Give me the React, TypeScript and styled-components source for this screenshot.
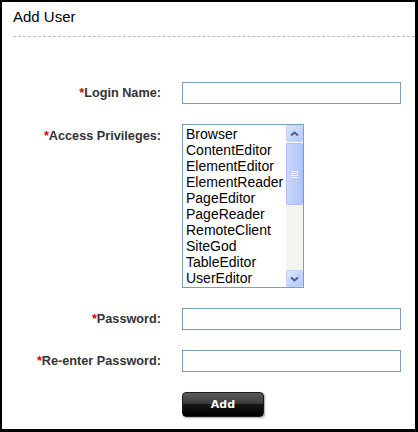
import styled, { createGlobalStyle } from "styled-components";

const GlobalStyle = createGlobalStyle`
  html, body {
    margin: 0;
    padding: 0;
    background: #fff;
  }
`;

const privileges = [
  "Browser",
  "ContentEditor",
  "ElementEditor",
  "ElementReader",
  "PageEditor",
  "PageReader",
  "RemoteClient",
  "SiteGod",
  "TableEditor",
  "UserEditor",
];

const fields = [
  { label: "Password:", type: "password" },
  { label: "Re-enter Password:", type: "password" },
];

function Chevron({ down }: { down?: boolean }) {
  return (
    <svg width="9" height="6" viewBox="0 0 9 6">
      <path
        d={down ? "M1 1.5 L4.5 4.5 L8 1.5" : "M1 4.5 L4.5 1.5 L8 4.5"}
        fill="none"
        stroke="#4d6185"
        strokeWidth="2"
      />
    </svg>
  );
}

function App() {
  return (
    <>
      <GlobalStyle />
      <Frame>
        <Heading>Add User</Heading>
        <Form>
          <Row>
            <Label>
              <Star>*</Star>Login Name:
            </Label>
            <TextInput type="text" />
          </Row>
          <Row>
            <Label $top>
              <Star>*</Star>Access Privileges:
            </Label>
            <ListBox>
              <Options>
                {privileges.map((p) => (
                  <Option key={p}>{p}</Option>
                ))}
              </Options>
              <ScrollBar>
                <ScrollButton>
                  <Chevron />
                </ScrollButton>
                <Track>
                  <Thumb>
                    <Grip />
                  </Thumb>
                </Track>
                <ScrollButton>
                  <Chevron down />
                </ScrollButton>
              </ScrollBar>
            </ListBox>
          </Row>
          {fields.map((f) => (
            <Row key={f.label}>
              <Label>
                <Star>*</Star>
                {f.label}
              </Label>
              <TextInput type={f.type} />
            </Row>
          ))}
          <Row>
            <span />
            <AddButton type="button">Add</AddButton>
          </Row>
        </Form>
      </Frame>
    </>
  );
}

const Frame = styled.div`
  box-sizing: border-box;
  width: 418px;
  height: 432px;
  border-style: solid;
  border-color: #000;
  border-width: 2px 3px 3px 2px;
  background: #fff;
  font-family: "Liberation Sans", Arial, sans-serif;
`;

const Heading = styled.h1`
  margin: 0 0 0 11px;
  padding: 6px 0 10px;
  font-size: 15px;
  line-height: 18px;
  font-weight: normal;
  color: #000;
  border-bottom: 1px dashed #bdbdbd;
`;

const Form = styled.div`
  display: flex;
  flex-direction: column;
  gap: 20px;
  margin-top: 45px;
`;

const Row = styled.div`
  display: grid;
  grid-template-columns: 159px 218px;
  column-gap: 21px;
  align-items: center;
`;

const Label = styled.label<{ $top?: boolean }>`
  text-align: right;
  font-size: 12.7px;
  line-height: 15px;
  font-weight: bold;
  color: #333;
  align-self: ${(p) => (p.$top ? "start" : "center")};
  padding-top: ${(p) => (p.$top ? "5px" : "0")};
`;

const Star = styled.span`
  color: #d40000;
`;

const TextInput = styled.input`
  box-sizing: border-box;
  width: 219px;
  height: 22px;
  margin: 0;
  padding: 2px 4px;
  border: 1px solid #7f9db9;
  font-family: "Liberation Sans", Arial, sans-serif;
  font-size: 13px;
  outline: none;
`;

const ListBox = styled.div`
  box-sizing: border-box;
  width: 122px;
  height: 164px;
  border: 1px solid #7f9db9;
  display: flex;
  background: #fff;
`;

const Options = styled.div`
  flex: 1;
  padding: 1px 0 0 3px;
  overflow: hidden;
`;

const Option = styled.div`
  font-size: 14px;
  line-height: 16px;
  color: #000;
  white-space: nowrap;
`;

const ScrollBar = styled.div`
  width: 17px;
  display: flex;
  flex-direction: column;
  background: #f4f3ee;
`;

const ScrollButton = styled.div`
  box-sizing: border-box;
  height: 17px;
  display: flex;
  align-items: center;
  justify-content: center;
  border: 1px solid #c3d3fd;
  border-radius: 2px;
  background: linear-gradient(135deg, #dde6fe 0%, #c1d3fb 60%, #b6c9f8 100%);
`;

const Track = styled.div`
  flex: 1;
  padding-top: 1px;
`;

const Thumb = styled.div`
  box-sizing: border-box;
  height: 62px;
  border: 1px solid #a9bffa;
  border-radius: 2px;
  background: linear-gradient(90deg, #c9d8fc 0%, #bccdfa 50%, #b1c5f8 100%);
  display: flex;
  align-items: center;
  justify-content: center;
`;

const Grip = styled.div`
  width: 7px;
  height: 7px;
  background: repeating-linear-gradient(
    180deg,
    #eef3ff 0px,
    #eef3ff 1px,
    transparent 1px,
    transparent 2px
  );
`;

const AddButton = styled.button`
  box-sizing: border-box;
  width: 82px;
  height: 25px;
  margin: 0;
  padding: 0;
  border: 1px solid #1a1a1a;
  border-radius: 4px;
  background: linear-gradient(
    180deg,
    #5a5a5a 0%,
    #3c3c3c 45%,
    #161616 50%,
    #000 100%
  );
  box-shadow: 1px 1px 2px rgba(0, 0, 0, 0.35);
  color: #fff;
  font-family: "DejaVu Sans", Verdana, sans-serif;
  font-size: 11px;
  font-weight: bold;
  cursor: pointer;
`;

export default App;
